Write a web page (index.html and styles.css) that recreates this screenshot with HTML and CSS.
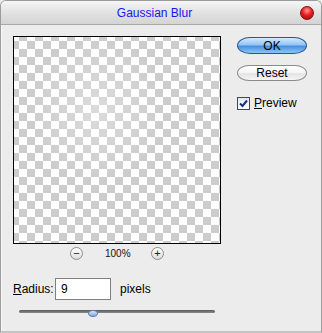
FILE: index.html
```html
<!DOCTYPE html>
<html lang="en">
<head>
    <meta charset="UTF-8">
    <title>Gaussian Blur</title>
    <link rel="stylesheet" href="styles.css">
</head>
<body>
    <div class="window">
        <div class="titlebar">
            <span class="title">Gaussian Blur</span>
            <span class="close-btn"></span>
        </div>

        <div class="main">
            <div class="left-col">
                <div class="preview"></div>

                <div class="zoom-row">
                    <span class="zoom-btn">&minus;</span>
                    <span class="zoom-value">100%</span>
                    <span class="zoom-btn">+</span>
                </div>

                <div class="radius-row">
                    <label class="radius-label"><u>R</u>adius:</label>
                    <input class="radius-input" type="text" value="9">
                    <span class="unit">pixels</span>
                </div>

                <div class="slider">
                    <div class="track"></div>
                    <div class="thumb"></div>
                </div>
            </div>

            <div class="right-col">
                <button class="pill-btn ok-btn">OK</button>
                <button class="pill-btn reset-btn">Reset</button>
                <div class="check-row">
                    <span class="checkbox">
                        <svg width="9" height="9" viewBox="0 0 9 9"><path d="M1 4.5 L3.5 7 L8 1.5" fill="none" stroke="#1d2f7a" stroke-width="2"/></svg>
                    </span>
                    <span class="check-label"><u>P</u>review</span>
                </div>
            </div>
        </div>
    </div>
</body>
</html>
```

FILE: styles.css
```css
* {
    box-sizing: border-box;
}
body {
    margin: 0;
    font-family: "Liberation Sans", Arial, sans-serif;
    font-size: 11px;
    color: #000;
    background: #ececec;
}
.window {
    width: 322px;
    height: 333px;
    border: 1px solid #9c9c9c;
    border-bottom: 2px solid #c4c4c4;
    border-radius: 6px 6px 0 0;
    background: #ececec;
    box-shadow: inset 1px 0 0 #f8f8f8;
}
.titlebar {
    height: 24px;
    display: flex;
    align-items: center;
    background: linear-gradient(#f6f6f6, #e2e2e2 50%, #d4d4d4);
    border-bottom: 1px solid #a9a9a9;
    border-radius: 5px 5px 0 0;
}
.title {
    flex: 1;
    text-align: center;
    padding-left: 8px;
    color: #1717f0;
    font-size: 12px;
}
.close-btn {
    width: 14px;
    height: 14px;
    margin-right: 7px;
    border-radius: 50%;
    border: 1px solid #8a1010;
    background: radial-gradient(circle at 50% 30%, #ff9c9c 0, #e82020 45%, #a80000 100%);
}
.main {
    display: flex;
    padding: 11px 0 0 12px;
}
.left-col {
    width: 208px;
}
.preview {
    width: 208px;
    height: 208px;
    border: 1px solid #000;
    background-color: #fff;
    background-image: radial-gradient(ellipse at 40% 35%, rgba(255,255,255,0.3), rgba(255,255,255,0) 40%),
        repeating-conic-gradient(#cccccc 0 25%, #ffffff 0 50%);
    background-size: 100% 100%, 16px 16px;
    background-position: 0 0, -3px -4px;
}
.zoom-row {
    display: flex;
    justify-content: center;
    align-items: center;
    gap: 22px;
    margin-top: 3px;
    height: 13px;
}
.zoom-btn {
    width: 13px;
    height: 13px;
    border-radius: 50%;
    border: 1px solid #8c8c8c;
    background: linear-gradient(#ffffff, #dcdcdc);
    font-size: 11px;
    line-height: 10px;
    text-align: center;
    color: #222;
}
.zoom-value {
    width: 24px;
    text-align: center;
    font-size: 10px;
    color: #111;
}
.radius-row {
    display: flex;
    align-items: center;
    margin-top: 18px;
    height: 22px;
}
.radius-label {
    width: 42px;
    font-size: 12px;
}
.radius-input {
    width: 56px;
    height: 22px;
    border: 1px solid #7f7f7f;
    background: #fff;
    padding: 0 5px;
    font-family: "Liberation Sans", Arial, sans-serif;
    font-size: 12px;
    outline: none;
}
.unit {
    margin-left: 9px;
    font-size: 12px;
}
.slider {
    position: relative;
    margin: 10px 0 0 6px;
    width: 196px;
    height: 8px;
}
.track {
    margin-top: 2px;
    height: 3px;
    border-radius: 2px;
    background: linear-gradient(#5a5a5a, #8a8a8a);
}
.thumb {
    position: absolute;
    left: 69px;
    top: 0;
    width: 10px;
    height: 7px;
    border-radius: 50%;
    border: 1px solid #5d7fb0;
    background: linear-gradient(#d8e6f8, #88a8d8);
}
.right-col {
    margin-left: 16px;
    width: 70px;
}
.pill-btn {
    display: block;
    width: 70px;
    border-radius: 14px / 9px;
    font-family: "Liberation Sans", Arial, sans-serif;
    font-size: 12px;
    color: #000;
    padding: 0;
    cursor: pointer;
}
.ok-btn {
    margin-top: 1px;
    height: 17px;
    border: 1px solid #2a5590;
    background: linear-gradient(#d4e9fc, #93c5f5 45%, #4690e4 55%, #8cc6f6);
}
.reset-btn {
    margin-top: 11px;
    height: 16px;
    border: 1px solid #8a8a8a;
    background: linear-gradient(#ffffff, #f4f4f4 50%, #e2e2e2 55%, #f6f6f6);
}
.check-row {
    display: flex;
    align-items: center;
    margin-top: 15px;
}
.checkbox {
    width: 13px;
    height: 13px;
    border: 1px solid #1c4f8c;
    background: linear-gradient(#dde8f6, #ffffff);
    display: flex;
    align-items: center;
    justify-content: center;
}
.check-label {
    margin-left: 4px;
    font-size: 12px;
}
```
